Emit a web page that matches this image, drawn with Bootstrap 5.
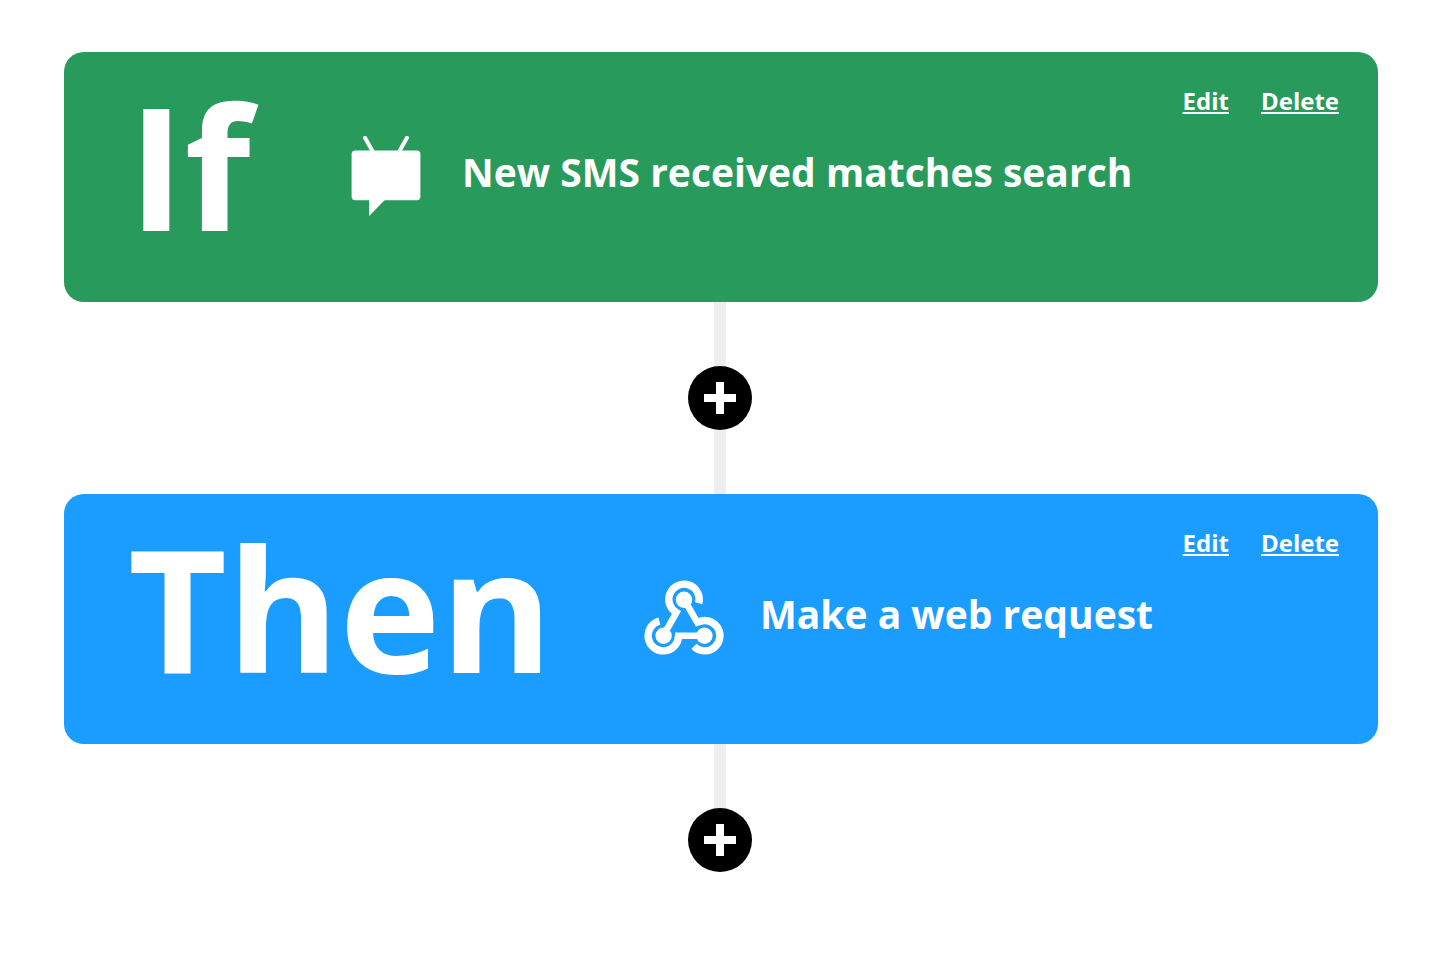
<!DOCTYPE html>
<html lang="en">
<head>
<meta charset="utf-8">
<meta name="viewport" content="width=device-width, initial-scale=1">
<title>Applet editor</title>
<link href="https://cdn.jsdelivr.net/npm/bootstrap@5.3.0/dist/css/bootstrap.min.css" rel="stylesheet">
<style>
  body { font-family: "Open Sans", sans-serif; font-weight: 700; background: #fff; }
  .flow { padding: 52px 16px 92px 0; }
  .step { min-height: 250px; margin-left: 64px; margin-right: 62px; padding: 44px 64px; border-radius: 20px; color: #fff; }
  .step-if { background: #289a5c; }
  .step-then { background: #1b9cff; }
  .step-label { font-size: 171px; line-height: 138px; font-weight: 740; }
  .step-if .step-label { width: 218px; }
  .step-then .step-label { width: 516px; }
  .step-icon { width: 80px; height: 80px; margin-top: 40px; }
  .step-title { font-size: 39px; line-height: 50px; font-weight: 700; margin: 51px 0 0 36px; }
  .step-actions { top: 32px; right: 39px; gap: 32px; font-size: 24px; line-height: 34px; }
  .step-actions a { color: #fff; text-decoration: underline; text-decoration-thickness: 2px; text-underline-offset: 2px; }
  .stem { width: 12px; height: 64px; background: #eee; }
  .add-btn { width: 64px; height: 64px; background: #000; }
  @media (max-width: 1199px) {
    .step-body { flex-wrap: wrap; }
    .step-title { margin-left: 16px; flex: 1; }
  }
</style>
</head>
<body>
<main class="flow d-flex flex-column">
  <section class="step step-if position-relative">
    <div class="step-body d-flex align-items-start">
      <h1 class="step-label flex-shrink-0 mb-0">If</h1>
      <svg class="step-icon flex-shrink-0" viewBox="0 0 80 80" fill="#fff" aria-hidden="true">
        <rect x="5.6" y="14.6" width="68.8" height="49.6" rx="3.6"/>
        <path d="M23.2 63v17L39 63.8z"/>
        <path d="M19 1.8 27 16M61 1.8 53 16" fill="none" stroke="#fff" stroke-width="4" stroke-linecap="round"/>
      </svg>
      <h2 class="step-title">New SMS received matches search</h2>
    </div>
    <div class="step-actions position-absolute d-flex">
      <a href="#edit-if">Edit</a>
      <a href="#delete-if">Delete</a>
    </div>
  </section>

  <div class="d-flex flex-column align-items-center">
    <div class="stem"></div>
    <button type="button" class="add-btn btn rounded-circle border-0 p-0 d-flex align-items-center justify-content-center" aria-label="Add a step after If">
      <svg width="32" height="32" viewBox="0 0 32 32" aria-hidden="true"><path d="M12 0h8v12h12v8H20v12h-8V20H0v-8h12z" fill="#fff"/></svg>
    </button>
    <div class="stem"></div>
  </div>

  <section class="step step-then position-relative">
    <div class="step-body d-flex align-items-start">
      <h1 class="step-label flex-shrink-0 mb-0">Then</h1>
      <svg class="step-icon flex-shrink-0" viewBox="0 0 80 80" fill="none" stroke="#fff" aria-hidden="true">
        <g stroke-width="7.4">
          <path d="M54.7 25.2A15.2 15.2 0 1 0 32.4 34.5"/>
          <path d="M53.1 44.5A15.2 15.2 0 1 1 49.9 68.4"/>
          <path d="M34.5 57.7A15.2 15.2 0 1 1 15.4 43"/>
        </g>
        <path d="M34.2 31.4 19.3 57.7M40 21.3 54.9 47.2M60.7 57.7H31" stroke-width="6.6"/>
        <g fill="#fff" stroke="none">
          <circle cx="40" cy="21.8" r="8.2"/>
          <circle cx="19.6" cy="57.7" r="8.2"/>
          <circle cx="60.4" cy="57.7" r="8.2"/>
        </g>
      </svg>
      <h2 class="step-title">Make a web request</h2>
    </div>
    <div class="step-actions position-absolute d-flex">
      <a href="#edit-then">Edit</a>
      <a href="#delete-then">Delete</a>
    </div>
  </section>

  <div class="d-flex flex-column align-items-center">
    <div class="stem"></div>
    <button type="button" class="add-btn btn rounded-circle border-0 p-0 d-flex align-items-center justify-content-center" aria-label="Add a step after Then">
      <svg width="32" height="32" viewBox="0 0 32 32" aria-hidden="true"><path d="M12 0h8v12h12v8H20v12h-8V20H0v-8h12z" fill="#fff"/></svg>
    </button>
  </div>
</main>
<script src="https://cdn.jsdelivr.net/npm/bootstrap@5.3.0/dist/js/bootstrap.bundle.min.js"></script>
</body>
</html>
